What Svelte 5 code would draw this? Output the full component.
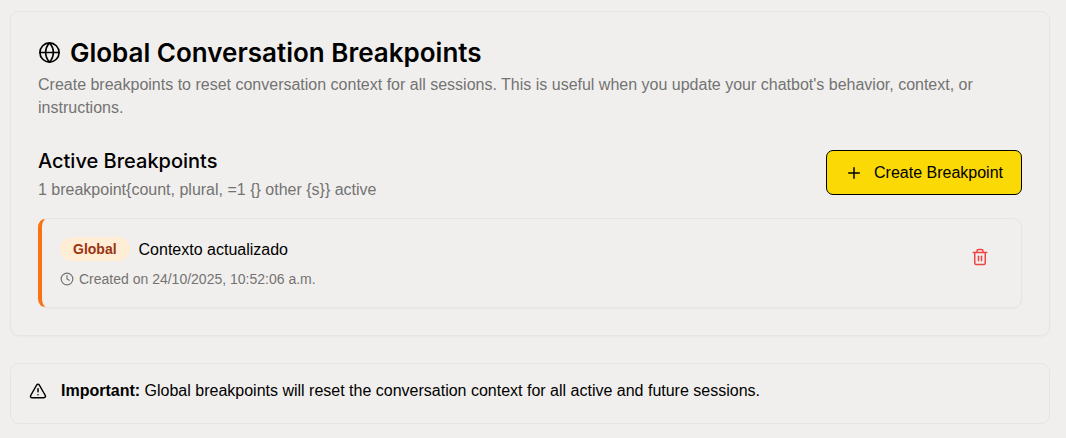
<script>
  let breakpoints = $state([
    { id: 1, title: 'Contexto actualizado', createdAt: '24/10/2025, 10:52:06 a.m.' }
  ]);

  function removeBreakpoint(id) {
    breakpoints = breakpoints.filter((item) => item.id !== id);
  }

  function createBreakpoint() {
    breakpoints.push({
      id: Date.now(),
      title: 'Contexto actualizado',
      createdAt: new Date().toLocaleString('es-MX')
    });
  }
</script>

<main class="page">
  <section class="card">
    <header class="card-header">
      <h1 class="card-title">
        <svg class="icon icon-globe" viewBox="0 0 24 24" aria-hidden="true">
          <circle cx="12" cy="12" r="10" />
          <path d="M12 2a14.5 14.5 0 0 0 0 20 14.5 14.5 0 0 0 0-20" />
          <path d="M2 12h20" />
        </svg>
        Global Conversation Breakpoints
      </h1>
      <p class="description">
        Create breakpoints to reset conversation context for all sessions. This is useful when you
        update your chatbot's behavior, context, or instructions.
      </p>
    </header>

    <div class="toolbar">
      <div>
        <h2 class="subtitle">Active Breakpoints</h2>
        <p class="count">{breakpoints.length} breakpoint{'{count, plural, =1 {} other {s}}'} active</p>
      </div>
      <button class="btn-create" type="button" onclick={createBreakpoint}>
        <svg class="icon icon-plus" viewBox="0 0 24 24" aria-hidden="true">
          <path d="M5 12h14" />
          <path d="M12 5v14" />
        </svg>
        Create Breakpoint
      </button>
    </div>

    <ul class="list">
      {#each breakpoints as item (item.id)}
        <li class="item">
          <div class="item-body">
            <div class="item-heading">
              <span class="badge">Global</span>
              <span class="item-title">{item.title}</span>
            </div>
            <div class="item-meta">
              <svg class="icon icon-clock" viewBox="0 0 24 24" aria-hidden="true">
                <circle cx="12" cy="12" r="10" />
                <path d="M12 6v6l4 2" />
              </svg>
              <span>Created on {item.createdAt}</span>
            </div>
          </div>
          <button
            class="btn-delete"
            type="button"
            aria-label="Delete breakpoint"
            onclick={() => removeBreakpoint(item.id)}
          >
            <svg class="icon icon-trash" viewBox="0 0 24 24" aria-hidden="true">
              <path d="M3 6h18" />
              <path d="M19 6v14c0 1-1 2-2 2H7c-1 0-2-1-2-2V6" />
              <path d="M8 6V4c0-1 1-2 2-2h4c1 0 2 1 2 2v2" />
              <path d="M10 11v6" />
              <path d="M14 11v6" />
            </svg>
          </button>
        </li>
      {/each}
    </ul>
  </section>

  <div class="alert" role="alert">
    <svg class="icon icon-alert" viewBox="0 0 24 24" aria-hidden="true">
      <path d="m21.73 18-8-14a2 2 0 0 0-3.48 0l-8 14A2 2 0 0 0 4 21h16a2 2 0 0 0 1.73-3" />
      <path d="M12 9v4" />
      <path d="M12 17h.01" />
    </svg>
    <p>
      <strong>Important:</strong> Global breakpoints will reset the conversation context for all active
      and future sessions.
    </p>
  </div>
</main>

<style>
  :global(body) {
    margin: 0;
    background: #f1efed;
  }

  .page {
    display: flex;
    flex-direction: column;
    gap: 27px;
    padding: 11px 16px 14px 10px;
    font-family: 'Liberation Sans', Arial, sans-serif;
    font-size: 16px;
    line-height: 23px;
    color: #000;
  }

  h1, h2, p, ul {
    margin: 0;
    padding: 0;
  }

  .icon {
    flex-shrink: 0;
    fill: none;
    stroke: currentColor;
    stroke-width: 2;
    stroke-linecap: round;
    stroke-linejoin: round;
  }

  .card {
    padding: 27px;
    border: 1px solid #e7e5e3;
    border-radius: 9px;
    box-shadow: 0 1px 2px rgba(0, 0, 0, 0.03);
  }

  .card-title {
    display: flex;
    align-items: center;
    gap: 9px;
    font-family: Inter, sans-serif;
    font-size: 26px;
    line-height: 27px;
    font-weight: 600;
  }

  .icon-globe {
    width: 23px;
    height: 23px;
    stroke-width: 1.75;
  }

  .description {
    margin-top: 7px;
    color: #737373;
  }

  .toolbar {
    display: flex;
    align-items: center;
    justify-content: space-between;
    margin-top: 25px;
  }

  .subtitle {
    font-family: Inter, sans-serif;
    font-size: 20px;
    line-height: 34px;
    font-weight: 500;
  }

  .count {
    color: #737373;
  }

  .btn-create {
    display: inline-flex;
    align-items: center;
    gap: 11px;
    height: 45px;
    padding: 0 18px;
    border: 1px solid #000;
    border-radius: 7px;
    background: #fbd904;
    color: #000;
    font: inherit;
    cursor: pointer;
  }

  .icon-plus {
    width: 18px;
    height: 18px;
  }

  .list {
    display: flex;
    flex-direction: column;
    gap: 14px;
    margin-top: 17px;
    list-style: none;
  }

  .item {
    display: flex;
    align-items: flex-start;
    justify-content: space-between;
    padding: 18px;
    border: 1px solid #e7e5e3;
    border-left: 4px solid #f97316;
    border-radius: 9px;
    box-shadow: 0 1px 2px rgba(0, 0, 0, 0.03);
  }

  .item-heading {
    display: flex;
    align-items: center;
    gap: 9px;
  }

  .badge {
    padding: 0 13px;
    border-radius: 12px;
    background: #ffedd5;
    color: #9a3412;
    font-size: 14px;
    line-height: 24px;
    font-weight: 700;
  }

  .item-meta {
    display: flex;
    align-items: center;
    gap: 5px;
    margin-top: 8px;
    font-size: 14px;
    line-height: 20px;
    color: #737373;
  }

  .icon-clock {
    width: 14px;
    height: 14px;
  }

  .btn-delete {
    display: flex;
    align-items: center;
    justify-content: center;
    width: 46px;
    height: 40px;
    padding: 0;
    border: 0;
    background: none;
    color: #ef4444;
    cursor: pointer;
  }

  .icon-trash {
    width: 18px;
    height: 18px;
  }

  .alert {
    display: flex;
    align-items: center;
    gap: 14px;
    padding: 15px 18px 21px;
    border: 1px solid #e7e5e3;
    border-radius: 9px;
  }

  .icon-alert {
    width: 18px;
    height: 18px;
  }
</style>
